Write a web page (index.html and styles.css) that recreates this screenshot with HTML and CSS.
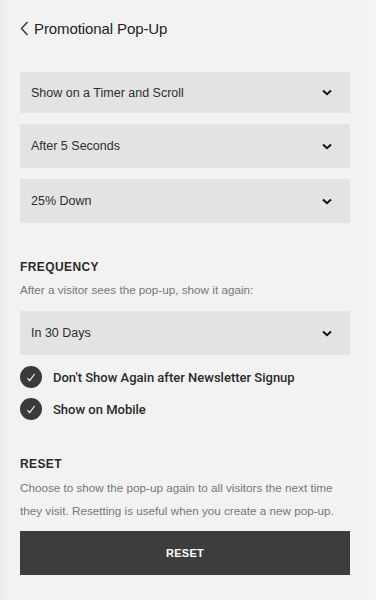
FILE: index.html
```html
<!DOCTYPE html>
<html lang="en">
<head>
<meta charset="utf-8">
<title>Promotional Pop-Up</title>
<link rel="stylesheet" href="styles.css">
</head>
<body>
<div class="panel">
  <header class="header">
    <svg class="back" width="9" height="15" viewBox="0 0 9 15"><path d="M7.5 1 L1.5 7.5 L7.5 14" fill="none" stroke="#333" stroke-width="1.4"/></svg>
    <span class="title">Promotional Pop-Up</span>
  </header>

  <div class="selects">
    <div class="select first"><span>Show on a Timer and Scroll</span><svg class="chev" width="10" height="7" viewBox="0 0 10 7"><path d="M1 1.5 L5 5.2 L9 1.5" fill="none" stroke="#111" stroke-width="2"/></svg></div>
    <div class="select"><span>After 5 Seconds</span><svg class="chev" width="10" height="7" viewBox="0 0 10 7"><path d="M1 1.5 L5 5.2 L9 1.5" fill="none" stroke="#111" stroke-width="2"/></svg></div>
    <div class="select"><span>25% Down</span><svg class="chev" width="10" height="7" viewBox="0 0 10 7"><path d="M1 1.5 L5 5.2 L9 1.5" fill="none" stroke="#111" stroke-width="2"/></svg></div>
  </div>

  <section class="section freq">
    <h2 class="heading">FREQUENCY</h2>
    <p class="desc">After a visitor sees the pop-up, show it again:</p>
    <div class="select"><span>In 30 Days</span><svg class="chev" width="10" height="7" viewBox="0 0 10 7"><path d="M1 1.5 L5 5.2 L9 1.5" fill="none" stroke="#111" stroke-width="2"/></svg></div>
    <div class="checks">
      <label class="check"><span class="box"><svg width="10" height="9" viewBox="0 0 10 9"><path d="M1.5 5.2 L3.7 7.6 L8.6 1" fill="none" stroke="#fff" stroke-width="1.1"/></svg></span><span class="label">Don't Show Again after Newsletter Signup</span></label>
      <label class="check"><span class="box"><svg width="10" height="9" viewBox="0 0 10 9"><path d="M1.5 5.2 L3.7 7.6 L8.6 1" fill="none" stroke="#fff" stroke-width="1.1"/></svg></span><span class="label">Show on Mobile</span></label>
    </div>
  </section>

  <section class="section reset">
    <h2 class="heading">RESET</h2>
    <p class="desc long">Choose to show the pop-up again to all visitors the next time they visit. Resetting is useful when you create a new pop-up.</p>
    <button class="btn">RESET</button>
  </section>
</div>
</body>
</html>
```

FILE: styles.css
```css
html, body {
  margin: 0;
  padding: 0;
}
body {
  background: #f2f2f2;
  font-family: "Liberation Sans", Arial, sans-serif;
  color: #222;
  width: 376px;
  height: 600px;
  overflow: hidden;
}
.panel {
  box-sizing: border-box;
  height: 600px;
  padding: 0 26px 0 20px;
  background: linear-gradient(to right, #ebebeb 0, #f2f2f2 8px, #f2f2f2 368px, #f5f5f5 369px);
}
.header {
  display: flex;
  align-items: center;
  gap: 5px;
  height: 56px;
}
.back {
  display: block;
  margin-top: 1px;
}
.title {
  font-size: 15px;
  color: #222;
  letter-spacing: -0.1px;
}
.selects {
  display: flex;
  flex-direction: column;
  gap: 11px;
  margin-top: 16px;
}
.select {
  display: flex;
  align-items: center;
  justify-content: space-between;
  height: 44px;
  background: #e3e3e3;
  padding: 0 18px 0 11px;
  font-size: 12.5px;
  color: #2e2e2e;
}
.select.first {
  height: 41px;
}
.chev {
  display: block;
}
.section {
  display: flex;
  flex-direction: column;
}
.freq {
  margin-top: 36px;
}
.heading {
  margin: 0;
  font-size: 12px;
  font-weight: bold;
  letter-spacing: 0.4px;
  color: #2b2b2b;
  line-height: 16px;
}
.desc {
  margin: 6px 0 0;
  font-size: 11.7px;
  color: #777;
  line-height: 23px;
}
.freq .desc {
  line-height: 16px;
  margin: 7px 0 13px;
}
.checks {
  display: flex;
  flex-direction: column;
  gap: 10px;
  margin-top: 11px;
}
.check {
  display: flex;
  align-items: center;
  gap: 11px;
}
.box {
  width: 22px;
  height: 22px;
  border-radius: 50%;
  background: #3a3a3a;
  display: flex;
  align-items: center;
  justify-content: center;
}
.box svg {
  display: block;
}
.label {
  font-family: Roboto, "Liberation Sans", sans-serif;
  font-size: 13px;
  font-weight: 500;
  color: #2a2a2a;
}
.reset {
  margin-top: 36px;
}
.reset .desc {
  margin-top: 4px;
}
.btn {
  margin-top: 9px;
  height: 44px;
  width: 100%;
  border: 0;
  background: #3d3d3d;
  color: #fff;
  font-family: "Liberation Sans", Arial, sans-serif;
  font-size: 11px;
  font-weight: bold;
  letter-spacing: 0.3px;
  cursor: pointer;
}
```
